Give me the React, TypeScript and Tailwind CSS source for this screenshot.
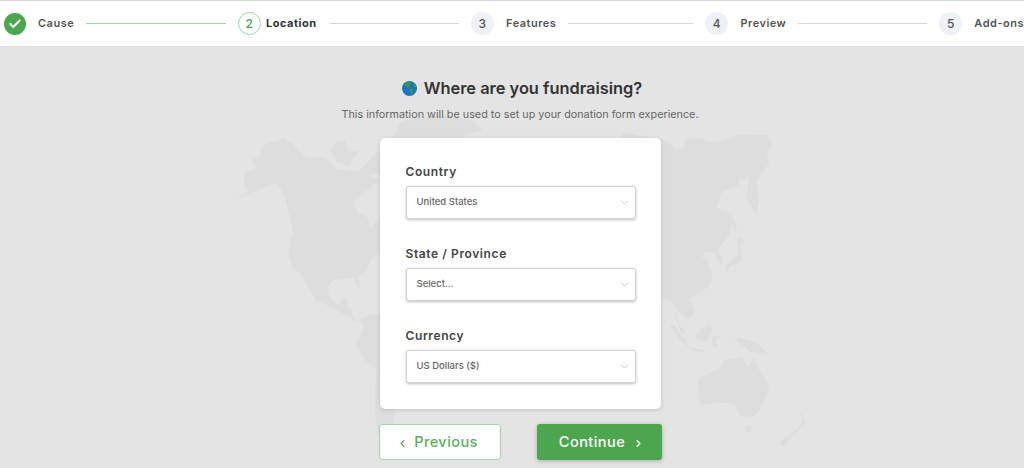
import React from "react";
import { Check, ChevronDown, ChevronLeft, ChevronRight } from "lucide-react";

const WEST = [
  "M125 60L130 45L190 25L215 40L250 75L265 85L310 80L335 100L345 118L420 125L470 145L490 150L490 155L470 160L440 180L410 205L400 225L415 245L445 265L450 295L458 285L470 270L490 262L490 370L470 375L450 390L440 420L415 440L418 472L408 460L405 445L375 445L340 450L325 470L325 495L340 515L360 525L370 500L382 505L380 525L395 535L398 560L415 575L425 565L445 555L480 550L490 550L490 730L470 715L440 695L420 665L408 640L425 605L430 585L420 578L405 575L385 560L350 540L320 525L285 510L270 480L240 430L215 410L205 370L210 340L220 310L215 285L210 265L200 220L190 190L170 160L150 165L130 175L100 185L40 213L85 185L72 155L75 130L110 112L95 90L125 75Z",
  "M490 715L470 715L465 780L465 840L468 880L472 915L480 925L490 925L520 880L525 840L490 800Z",
  "M330 60L350 35L375 30L385 65L420 60L400 85L385 110L350 95Z",
  "M415 125L450 90L470 65L480 70L490 130L440 135Z",
];

const EAST = [
  "M35 60L60 70L80 92L105 75L110 55L150 55L180 65L210 65L250 50L270 42L310 45L350 45L368 80L350 100L358 130L340 155L320 180L328 240L318 283L300 255L290 225L297 160L285 180L270 175L265 195L245 205L215 215L200 265L235 275L245 310L240 340L210 380L205 395L218 420L215 435L200 420L195 400L170 395L155 410L175 425L188 465L180 495L150 520L115 535L133 565L130 585L115 597L85 575L75 555L50 540L35 530L20 530L20 60Z",
  "M240 270L260 320L258 340L245 310Z",
  "M265 350L285 360L270 375L278 425L240 440L230 460L225 440L262 405Z",
  "M75 570L85 610L108 640L95 640L78 600Z",
  "M58 615L75 620L110 665L115 680L90 660Z",
  "M115 682L160 690L160 697L125 690Z",
  "M135 645L178 610L188 625L170 665L145 660Z",
  "M190 650L218 645L195 660L205 680L190 680L185 660Z",
  "M250 650L270 655L300 660L330 675L355 705L335 700L300 695L275 675Z",
  "M145 775L205 745L225 720L275 710L295 745L310 710L325 745L357 795L350 830L325 875L300 895L270 885L255 855L240 850L195 850L150 855L145 820Z",
  "M288 918L305 915L300 935L290 938Z",
  "M450 875L470 905L445 930L425 950L400 980L388 970L420 945L445 920L458 905Z",
];

function WorldMap() {
  return (
    <svg viewBox="0 46 1024 422" className="absolute inset-0 h-full w-full" fill="#dddddd">
      <path d="M393 138L400 122L412 118L445 115L470 120L483 130L470 134L455 140Z" />
      <path d="M620 140L623 132L632 133L642 136L665 140Z" />
      <g transform="translate(220 130) scale(0.3333)">
        {WEST.map((d) => <path key={d} d={d} />)}
      </g>
      <g transform="translate(650 120) scale(0.3333)">
        {EAST.map((d) => <path key={d} d={d} />)}
      </g>
    </svg>
  );
}

function Globe() {
  return (
    <svg viewBox="0 0 16 16" className="h-[15px] w-[15px] shrink-0">
      <circle cx="8" cy="8" r="8" fill="#1b75bc" />
      <path d="M5 1.5L9 .8L10 2.5L7.5 4L8.5 6L6.5 7L4 5L2.5 4ZM9 8L12 9L11 13L9.5 14.5L8.5 11.5ZM11 2L14.5 4.5L15.5 8L13 6.5Z" fill="#3f9a3a" />
    </svg>
  );
}

function Dot({ n }: { n: number }) {
  return (
    <span className="flex h-[23px] w-[23px] shrink-0 items-center justify-center rounded-full bg-[#eef1f5] text-[12px] font-medium text-[#555]">
      {n}
    </span>
  );
}

function Line({ w, green }: { w: string; green?: boolean }) {
  return <span className={`${w} h-px shrink-0 ${green ? "bg-[#9fd3a8]" : "bg-[#d6d6d6]"}`} />;
}

function Field({ label, value }: { label: string; value: string }) {
  return (
    <div className="flex flex-col">
      <div className="h-[15px] text-[12px] font-semibold leading-[15px] tracking-[0.6px] text-[#444]">{label}</div>
      <div className="mt-[7px] flex h-[33px] items-center justify-between rounded-[3px] border border-[#d2d2d2] bg-white pl-[10px] pr-[4px] shadow-[0_1px_3px_rgba(0,0,0,0.25)]">
        <span className="text-[9.5px] font-medium text-[#666]">{value}</span>
        <ChevronDown className="h-[13px] w-[13px] text-[#bbb]" strokeWidth={1.5} />
      </div>
    </div>
  );
}

export default function App() {
  return (
    <div className="flex h-[468px] w-[1024px] flex-col overflow-hidden bg-[#e4e4e4] font-['Inter','Liberation_Sans',sans-serif]">
      <header className="flex h-[46px] shrink-0 items-center overflow-hidden whitespace-nowrap border-t border-[#d8d8d8] bg-white pl-[4px] text-[11px] tracking-[0.5px]">
        <span className="flex h-[22px] w-[22px] shrink-0 items-center justify-center rounded-full bg-[#4ca64f] text-white">
          <Check className="h-[14px] w-[14px]" strokeWidth={3.5} />
        </span>
        <span className="ml-[12px] w-[36px] font-semibold text-[#555]">Cause</span>
        <span className="ml-[12px]"><Line w="block w-[140px]" green /></span>
        <span className="ml-[12px] flex h-[23px] w-[23px] shrink-0 items-center justify-center rounded-full border border-[#9fd3a8] text-[12px] font-medium text-[#4ca64f]">2</span>
        <span className="ml-[5px] w-[54px] font-bold text-[#333]">Location</span>
        <span className="ml-[12px]"><Line w="block w-[129px]" /></span>
        <span className="ml-[12px]"><Dot n={3} /></span>
        <span className="ml-[12px] w-[51px] font-semibold text-[#555]">Features</span>
        <span className="ml-[12px]"><Line w="block w-[125px]" /></span>
        <span className="ml-[12px]"><Dot n={4} /></span>
        <span className="ml-[12px] w-[47px] font-semibold text-[#555]">Preview</span>
        <span className="ml-[12px]"><Line w="block w-[129px]" /></span>
        <span className="ml-[12px]"><Dot n={5} /></span>
        <span className="ml-[12px] font-semibold text-[#555]">Add-ons</span>
      </header>
      <main className="relative flex flex-1 flex-col items-center">
        <WorldMap />
        <div className="relative flex w-full flex-col items-center pl-[16px]">
          <h1 className="ml-[4px] mt-[31px] flex h-[22px] items-center gap-[7px] text-[16.4px] font-semibold text-[#333]">
            <Globe />
            Where are you fundraising?
          </h1>
          <p className="mt-[9px] h-[14px] text-[10.8px] leading-[14px] text-[#666]">
            This information will be used to set up your donation form experience.
          </p>
          <section className="mt-[16px] flex h-[271px] w-[281px] flex-col gap-[27px] rounded-[5px] bg-white pl-[26px] pr-[25px] pt-[26px] shadow-[0_1px_4px_rgba(0,0,0,0.15)]">
            <Field label="Country" value="United States" />
            <Field label="State / Province" value="Select..." />
            <Field label="Currency" value="US Dollars ($)" />
          </section>
          <div className="mt-[15px] flex h-[36px] w-[283px] justify-between">
            <button className="flex w-[122px] items-center justify-center gap-[6px] rounded-[3px] border border-[#a3d5a9] bg-white pr-[4px] pt-[2px] text-[14.6px] font-[450] tracking-[0.4px] text-[#5cae61]">
              <ChevronLeft className="h-[11px] w-[11px]" strokeWidth={3} />
              Previous
            </button>
            <button className="flex w-[125px] items-center justify-center gap-[8px] rounded-[3px] bg-[#4ca64f] pl-[5px] pt-[2px] text-[14.6px] font-[450] tracking-[0.4px] text-white shadow-[0_1px_4px_rgba(0,0,0,0.25)]">
              Continue
              <ChevronRight className="h-[11px] w-[11px]" strokeWidth={3} />
            </button>
          </div>
        </div>
      </main>
    </div>
  );
}
